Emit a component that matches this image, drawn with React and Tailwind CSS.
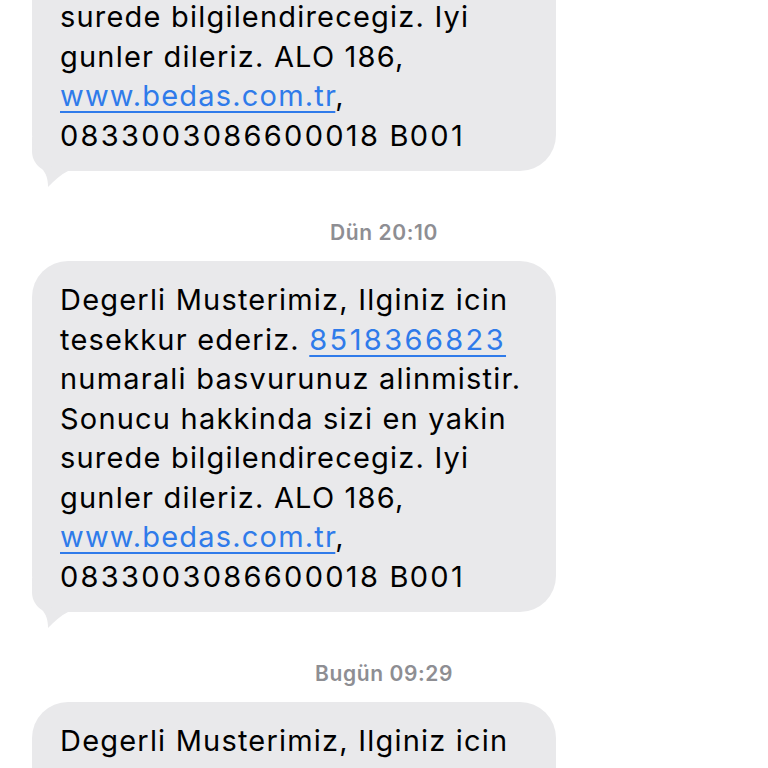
import React from "react";

function Tail() {
  return (
    <svg
      className="absolute left-0 bottom-[-16px]"
      width="40"
      height="50"
      viewBox="0 0 40 50"
    >
      <path
        d="M0 0 L0 14 C0 22 4 28 10 32 C14 36 16 42 16 50 C22 44 28 38 36 34 L40 34 L40 0 Z"
        fill="#e9e9eb"
      />
    </svg>
  );
}

function Link({ children, digits }) {
  return (
    <span
      className={
        digits
          ? "text-[#2f7bea] underline decoration-[1.5px] underline-offset-[5px] tracking-[2.4px]"
          : "text-[#2f7bea] underline decoration-[1.5px] underline-offset-[5px]"
      }
    >
      {children}
    </span>
  );
}

function Bubble({ number, lines = 8 }) {
  const all = [
    <>Degerli Musterimiz, Ilginiz icin</>,
    <>
      tesekkur ederiz. <Link digits>{number}</Link>
    </>,
    <>numarali basvurunuz alinmistir.</>,
    <>Sonucu hakkinda sizi en yakin</>,
    <>surede bilgilendirecegiz. Iyi</>,
    <>gunler dileriz. ALO 186,</>,
    <>
      <Link>www.bedas.com.tr</Link>,
    </>,
    <>
      <span className="tracking-[2.3px]">0833003086600018</span> B
      <span className="tracking-[2.3px]">001</span>
    </>,
  ];
  return (
    <div className="relative ml-[32px] w-[524px]">
      <Tail />
      <div className="relative rounded-[36px] bg-[#e9e9eb] pt-[19px] pb-[16px] pl-[28px] text-[29px] leading-[39.5px] text-black tracking-[1.2px]">
        {all.slice(0, lines).map((l, i) => (
          <div key={i} className="whitespace-nowrap">
            {l}
          </div>
        ))}
      </div>
    </div>
  );
}

function Stamp({ children }) {
  return (
    <div className="h-[90px] pt-[49px] text-center text-[21px] leading-[26px] font-semibold tracking-[0.6px] text-[#8e8e93]">
      {children}
    </div>
  );
}

export default function App() {
  return (
    <div
      className="w-[768px] h-[768px] overflow-hidden bg-white"
      style={{ fontFamily: "Inter, 'Noto Sans', sans-serif" }}
    >
      <div className="-mt-[180px] flex flex-col">
        <Bubble number="8518366823" />
        <Stamp>Dün 20:10</Stamp>
        <Bubble number="8518366823" />
        <Stamp>Bugün 09:29</Stamp>
        <Bubble number="8518366823" />
      </div>
    </div>
  );
}
